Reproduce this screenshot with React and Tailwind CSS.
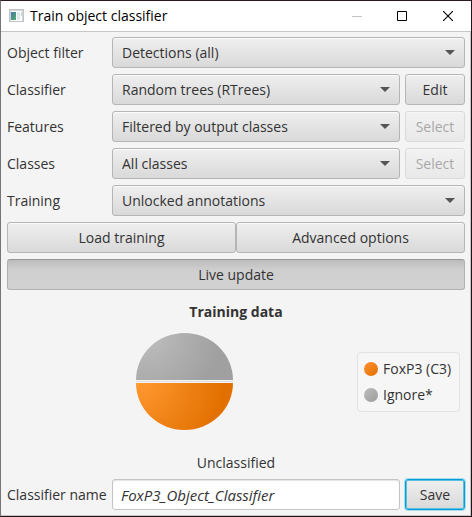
import { useState } from "react";

const BUTTON =
  "h-[31px] rounded-[3px] border border-[#b5b5b5] bg-linear-to-b from-[#efefef] to-[#d9d9d9] text-center text-[#333333] shadow-[inset_0_1px_0_#fafafa]";

function Combo({ id, value }) {
  return (
    <div className="relative min-w-0 flex-1">
      <select
        id={id}
        defaultValue={value}
        className="block h-[31px] w-full appearance-none rounded-[3px] border border-[#b5b5b5] bg-linear-to-b from-[#efefef] to-[#d9d9d9] pr-8 pl-[9px] text-[#333333] shadow-[inset_0_1px_0_#fafafa]"
      >
        <option>{value}</option>
      </select>
      <svg
        className="pointer-events-none absolute top-[13px] right-[10px]"
        width="10"
        height="5"
        viewBox="0 0 10 5"
        aria-hidden="true"
      >
        <path d="M0 0H10L5 5Z" fill="#555555" />
      </svg>
    </div>
  );
}

function Row({ id, label, value, action, disabled }) {
  return (
    <div className="flex items-center">
      <label htmlFor={id} className="w-[105px] shrink-0">
        {label}
      </label>
      <Combo id={id} value={value} />
      {action && (
        <button
          type="button"
          disabled={disabled}
          className={`${BUTTON} ml-[5px] w-[60px] shrink-0 disabled:opacity-40`}
        >
          {action}
        </button>
      )}
    </div>
  );
}

function TitleBar() {
  return (
    <header className="flex h-[31px] shrink-0 items-center border-b border-[#c6c6c6] bg-white pl-2 text-black">
      <svg width="16" height="14" viewBox="0 0 16 14" aria-hidden="true">
        <defs>
          <linearGradient id="app" x1="0" y1="0" x2="1" y2="1">
            <stop offset="0" stopColor="#4878a8" />
            <stop offset="1" stopColor="#4fae6a" />
          </linearGradient>
        </defs>
        <rect x="0.5" y="0.5" width="14" height="12" fill="#ffffff" stroke="#c0c4c8" />
        <rect x="1" y="1" width="13" height="1" fill="#d0d5da" />
        <rect x="1" y="2" width="1" height="10" fill="#d0d5da" />
        <rect x="13" y="2" width="1" height="10" fill="#d0d5da" />
        <rect x="2" y="3" width="5" height="8" fill="url(#app)" />
        <rect x="8" y="3" width="3" height="8" fill="#dde9e6" />
        <rect x="12" y="3" width="1" height="4" fill="#c3d4cc" />
      </svg>
      <h1 className="ml-[5px] flex-1 text-[14px]">Train object classifier</h1>
      <button type="button" disabled aria-label="Minimize" className="flex h-full w-[44px] items-center justify-center">
        <svg width="10" height="10" viewBox="0 0 10 10">
          <path d="M0 5.5H10" stroke="#c4c4c4" />
        </svg>
      </button>
      <button type="button" aria-label="Maximize" className="flex h-full w-[46px] items-center justify-center">
        <svg width="10" height="10" viewBox="0 0 10 10">
          <path d="M0.5 0.5H9.5V9.5H0.5Z" fill="none" stroke="#000" />
        </svg>
      </button>
      <button type="button" aria-label="Close" className="flex h-full w-[46px] items-center justify-center">
        <svg width="10" height="10" viewBox="0 0 10 10">
          <path d="M0 0L10 10M10 0L0 10" stroke="#000" strokeWidth="1.1" />
        </svg>
      </button>
    </header>
  );
}

function Pie() {
  return (
    <svg width="98" height="98" viewBox="0 0 98 98" role="img" aria-label="Training data by class">
      <defs>
        <radialGradient id="grey" gradientUnits="userSpaceOnUse" cx="10" cy="2" r="74">
          <stop offset="0" stopColor="#bebebe" />
          <stop offset="1" stopColor="#a0a0a0" />
        </radialGradient>
        <radialGradient id="orange" gradientUnits="userSpaceOnUse" cx="4" cy="50" r="84">
          <stop offset="0" stopColor="#ff9830" />
          <stop offset="1" stopColor="#e27000" />
        </radialGradient>
      </defs>
      <rect x="0" y="48" width="97" height="1" fill="#dddddd" />
      <path d="M0 47A48.5 47 0 0 1 97 47Z" fill="url(#grey)" />
      <path d="M0 50A48.5 47 0 0 0 97 50Z" fill="url(#orange)" />
    </svg>
  );
}

export default function App() {
  const [name, setName] = useState("FoxP3_Object_Classifier");

  return (
    <div className="flex min-h-screen flex-col border border-t-[#2c1a1c] border-r-[#241315] border-b-[#241315] border-l-[#77757a] bg-[#f4f4f4] font-['Open_Sans','Noto_Sans',sans-serif] text-[14px] leading-5 text-[#333333]">
      <TitleBar />
      <main className="flex flex-1 flex-col border-r border-b border-[#c6c6c6] pt-[5px] pr-[5px] pb-[5px] pl-[6px]">
        <div className="flex flex-col gap-[6px]">
          <Row id="filter" label="Object filter" value="Detections (all)" />
          <Row id="classifier" label="Classifier" value="Random trees (RTrees)" action="Edit" />
          <Row id="features" label="Features" value="Filtered by output classes" action="Select" disabled />
          <Row id="classes" label="Classes" value="All classes" action="Select" disabled />
          <Row id="training" label="Training" value="Unlocked annotations" />
          <div className="grid grid-cols-2">
            <button type="button" className={BUTTON}>Load training</button>
            <button type="button" className={BUTTON}>Advanced options</button>
          </div>
          <button
            type="button"
            aria-pressed="true"
            className="h-[31px] rounded-[3px] border border-[#b0b0b0] border-t-[#969696] bg-linear-to-b from-[#bdbdbd] via-[#cfcfcf] via-35% to-[#d1d1d1] text-center"
          >
            Live update
          </button>
        </div>

        <section className="flex flex-1 flex-col pt-[12px]">
          <h2 className="text-center font-bold">Training data</h2>
          <div className="flex flex-1 items-center">
            <div className="flex flex-1 justify-center pl-[5px]">
              <Pie />
            </div>
            <ul className="mr-[5px] flex w-[103px] shrink-0 flex-col gap-[6px] rounded-[4px] border border-[#e2e2e2] bg-[#f6f6f6] py-[6px] pl-[6px] whitespace-nowrap">
              <li className="flex items-center gap-[5px]">
                <span className="size-[14px] rounded-full bg-linear-to-br from-[#ff9028] to-[#e27000]" />
                FoxP3 (C3)
              </li>
              <li className="flex items-center gap-[5px]">
                <span className="size-[14px] rounded-full bg-linear-to-br from-[#bcbcbc] to-[#9c9c9c]" />
                Ignore*
              </li>
            </ul>
          </div>
        </section>

        <p className="mt-[12px] text-center">Unclassified</p>
        <div className="mt-[6px] flex items-center">
          <label htmlFor="name" className="w-[105px] shrink-0 whitespace-nowrap">
            Classifier name
          </label>
          <input
            id="name"
            type="text"
            value={name}
            onChange={(e) => setName(e.target.value)}
            className="h-[31px] min-w-0 flex-1 rounded-[3px] border border-[#c4c4c4] bg-white px-[8px] text-[15px] italic shadow-[inset_0_1px_1px_#e4e4e4]"
          />
          <button
            type="submit"
            className="ml-[5px] h-[31px] w-[60px] shrink-0 rounded-[3px] border border-[#039ed3] bg-linear-to-b from-[#efefef] to-[#d9d9d9] text-center shadow-[0_0_0_1px_#a8dcee,inset_0_0_0_1px_#5cbfe2]"
          >
            Save
          </button>
        </div>
      </main>
    </div>
  );
}
